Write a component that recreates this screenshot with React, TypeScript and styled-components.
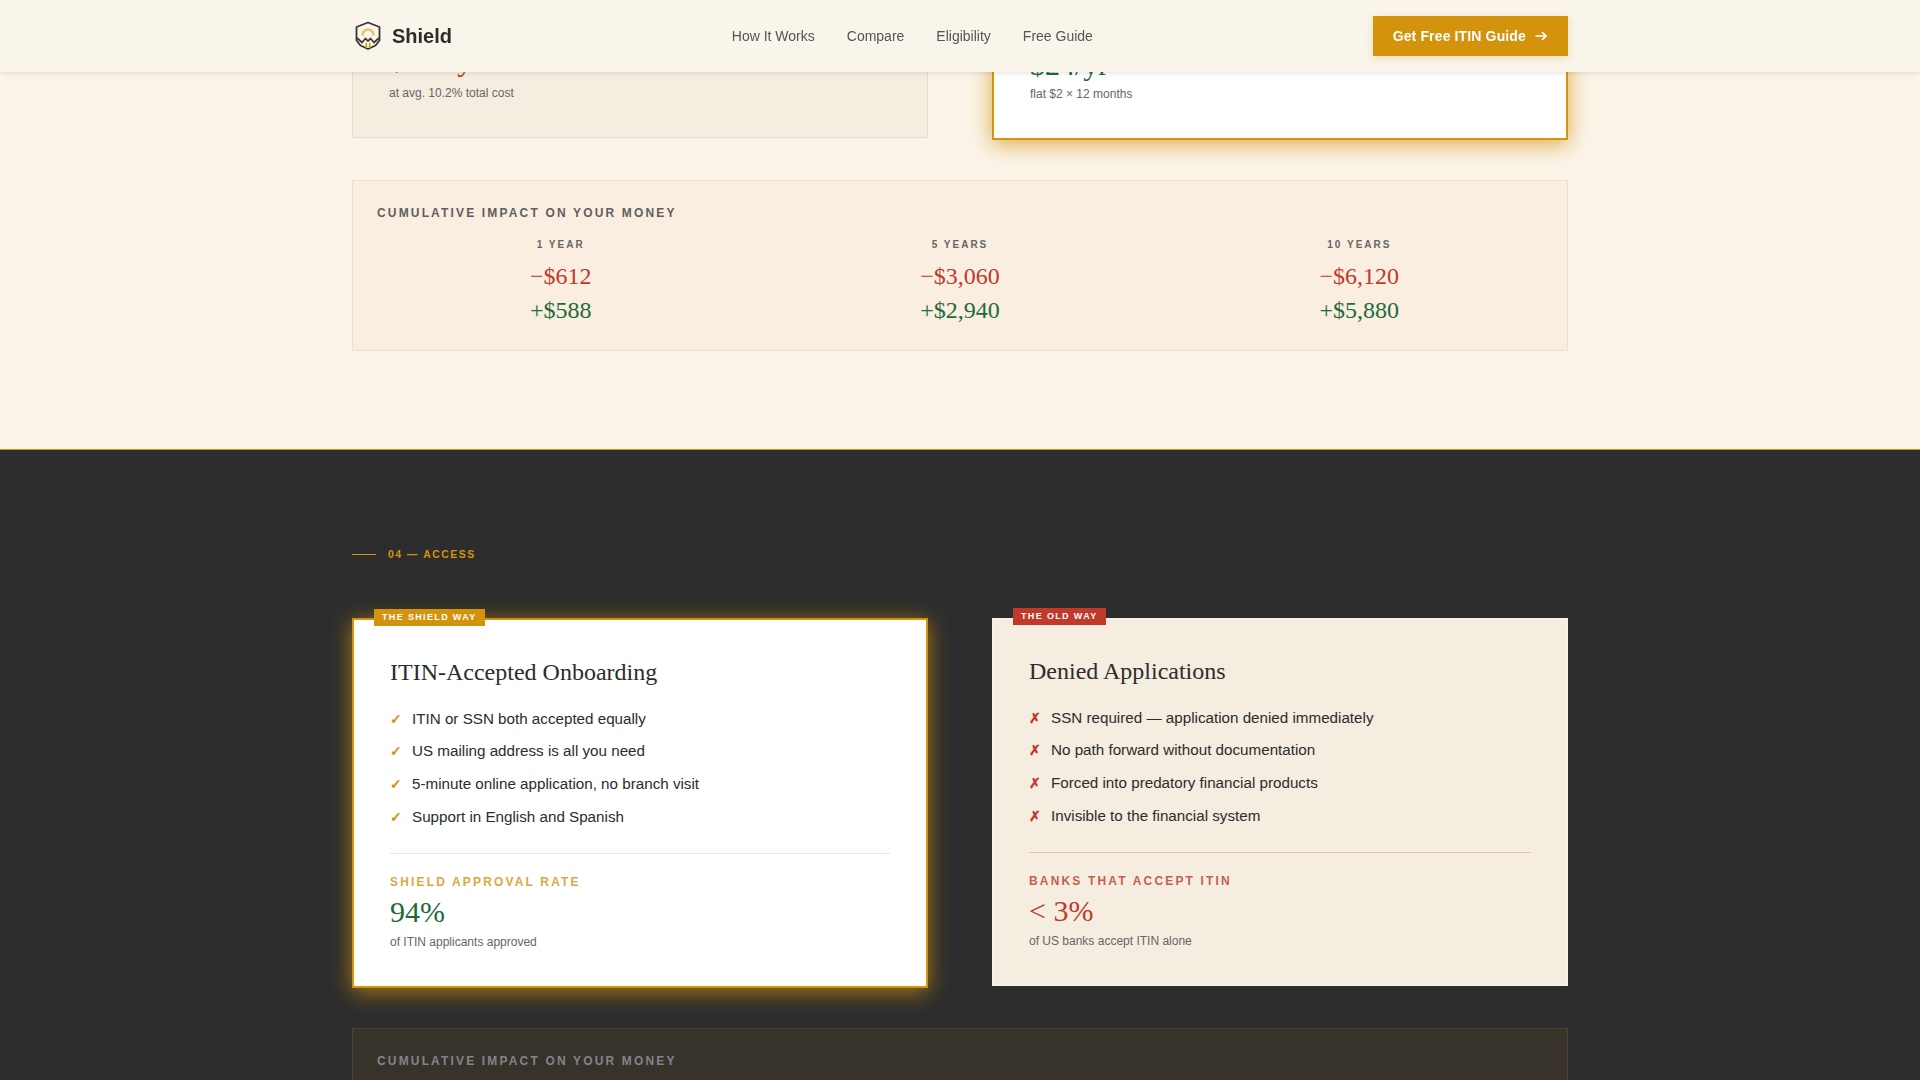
import React from "react";
import styled, { createGlobalStyle } from "styled-components";

const GOLD = "#d4930d";
const RED = "#c0392b";
const GREEN = "#1e6b3a";
const INK = "#2c2c2c";

const GlobalStyle = createGlobalStyle`
  html, body {
    margin: 0;
    height: 100%;
    overflow: hidden;
    background: #fbf4e8;
  }
  * { box-sizing: border-box; }
  body {
    font-family: "Liberation Sans", Arial, sans-serif;
    color: ${INK};
  }
`;

const Nav = styled.header`
  position: fixed;
  top: 0;
  left: 0;
  right: 0;
  z-index: 10;
  height: 72px;
  background: #faf5eb;
  box-shadow: 0 2px 4px rgba(44, 44, 44, 0.1);
`;

const Inner = styled.div`
  width: 1280px;
  margin: 0 auto;
  padding: 0 32px;
`;

const NavRow = styled(Inner)`
  height: 72px;
  display: flex;
  align-items: center;
  justify-content: space-between;
`;

const Brand = styled.a`
  display: flex;
  align-items: center;
  gap: 8px;
  font-size: 20px;
  font-weight: 700;
  color: ${INK};
`;

const NavLinks = styled.nav`
  display: flex;
  gap: 32px;
  font-size: 14px;
  color: #555;
`;

const NavButton = styled.a`
  display: flex;
  align-items: center;
  gap: 8px;
  height: 40px;
  padding: 0 20px;
  background: ${GOLD};
  color: #fff;
  font-size: 14px;
  font-weight: 700;
  letter-spacing: 0.01em;
  box-shadow: 0 2px 8px rgba(212, 147, 13, 0.25);
`;

const LightSection = styled.section`
  padding: 7px 0 98px;
`;

const DarkSection = styled.section`
  background: #2d2d2d;
  border-top: 1px solid ${GOLD};
  padding: 96px 0;
`;

const Eyebrow = styled.div`
  display: flex;
  align-items: center;
  gap: 12px;
  height: 16px;
  margin-bottom: 56px;
  font-size: 10.4px;
  font-weight: 700;
  letter-spacing: 0.15em;
  color: ${GOLD};
  &::before {
    content: "";
    width: 24px;
    height: 1px;
    background: ${GOLD};
  }
`;

const CardGrid = styled.div`
  display: grid;
  grid-template-columns: 1fr 1fr;
  gap: 64px;
  align-items: start;
`;

const Card = styled.article<{ $featured?: boolean; $onDark?: boolean }>`
  position: relative;
  padding: 36px;
  background: ${(p) => (p.$featured ? "#fff" : "#f5ede0")};
  border: ${(p) =>
    p.$featured
      ? `2px solid ${GOLD}`
      : `1px solid ${p.$onDark ? "#faf3e6" : "#e8dfd0"}`};
  box-shadow: ${(p) =>
    p.$featured ? "0 4px 20px rgba(212, 147, 13, 0.75)" : "none"};
`;

const Badge = styled.span<{ $old?: boolean }>`
  position: absolute;
  top: -11px;
  left: 20px;
  padding: 3px 8px;
  font-size: 9px;
  line-height: 11px;
  font-weight: 700;
  letter-spacing: 0.15em;
  color: #fff;
  background: ${(p) => (p.$old ? RED : GOLD)};
`;

const CardTitle = styled.h3`
  margin: 0 0 19.6px;
  font-family: "Liberation Serif", "Times New Roman", serif;
  font-weight: 400;
  font-size: 24px;
  line-height: 32px;
  color: ${INK};
`;

const Points = styled.ul`
  margin: 0 0 24.4px;
  padding: 0;
  list-style: none;
  display: flex;
  flex-direction: column;
  gap: 10px;
`;

const Point = styled.li<{ $bad?: boolean }>`
  display: flex;
  gap: 12px;
  font-size: 15.2px;
  line-height: 22.8px;
  color: ${INK};
  &::before {
    content: "${(p) => (p.$bad ? "✗" : "✓")}";
    width: 10px;
    font-size: 14px;
    font-weight: 700;
    color: ${(p) => (p.$bad ? RED : GOLD)};
  }
`;

const Stat = styled.div<{ $bad?: boolean }>`
  padding-top: 20px;
  border-top: 1px solid ${(p) => (p.$bad ? "rgba(192, 57, 43, 0.25)" : "#efe6d6")};
`;

const StatLabel = styled.div<{ $bad?: boolean }>`
  font-size: 12px;
  line-height: 16px;
  font-weight: 700;
  letter-spacing: 0.18em;
  color: ${(p) => (p.$bad ? RED : GOLD)};
  opacity: 0.8;
  margin-bottom: 3px;
`;

const StatValue = styled.div<{ $bad?: boolean; $nudge?: number }>`
  font-family: "Liberation Serif", "Times New Roman", serif;
  font-size: 30px;
  line-height: 38px;
  margin-top: ${(p) => p.$nudge ?? 0}px;
  margin-bottom: ${(p) => 3 - (p.$nudge ?? 0)}px;
  color: ${(p) => (p.$bad ? RED : GREEN)};
`;

const StatNote = styled.div`
  font-size: 12px;
  line-height: 16px;
  color: #666;
`;

const ImpactBox = styled.div<{ $dark?: boolean }>`
  margin-top: 40px;
  padding: 24px 24px 23px;
  background: ${(p) => (p.$dark ? "#37332b" : "#f9eee0")};
  border: 1px solid ${(p) => (p.$dark ? "#4c442f" : "#efdfc2")};
`;

const ImpactTitle = styled.div<{ $dark?: boolean }>`
  font-size: 12px;
  line-height: 16px;
  font-weight: 700;
  letter-spacing: 0.18em;
  color: ${(p) => (p.$dark ? "#85838a" : "#5f5f5f")};
  margin-bottom: 16px;
`;

const ImpactGrid = styled.div`
  display: grid;
  grid-template-columns: repeat(3, 1fr);
  gap: 32px;
  text-align: center;
`;

const ImpactYear = styled.div`
  font-size: 10px;
  line-height: 15px;
  font-weight: 700;
  letter-spacing: 0.2em;
  color: #666;
  margin-bottom: 7px;
`;

const ImpactAmount = styled.div<{ $gain?: boolean }>`
  font-family: "Liberation Serif", "Times New Roman", serif;
  font-size: 24px;
  line-height: 34px;
  color: ${(p) => (p.$gain ? GREEN : RED)};
`;

const Logo = () => (
  <svg width="32" height="32" viewBox="0 0 32 32" fill="none">
    <path
      d="M16 2.5 L27.5 7 V20.5 L23.5 25.5 L16 29 L8.5 25.5 L4.5 20.5 V7 Z"
      fill="#fbf6ea"
      stroke="#3a362e"
      strokeWidth="1.8"
      strokeLinejoin="round"
    />
    <path d="M10.5 15.5 C10.5 7.5 21.5 7.5 21.5 15.5" stroke="#e5c07b" strokeWidth="2.6" />
    <path
      d="M5 18 L10 22.5 L13.5 18.5 L16 21 L18.5 18.5 L22 22.5 L27 18"
      stroke="#3a362e"
      strokeWidth="1.7"
    />
    <path d="M14.3 23 V28 M17.7 23 V28" stroke={GOLD} strokeWidth="1.5" />
  </svg>
);

const Arrow = () => (
  <svg width="14" height="14" viewBox="0 0 14 14" fill="none" stroke="#fff" strokeWidth="1.7">
    <path d="M1.5 7 H12 M8 3 L12 7 L8 11" />
  </svg>
);

const impact = [
  { year: "1 YEAR", lost: "−$612", kept: "+$588" },
  { year: "5 YEARS", lost: "−$3,060", kept: "+$2,940" },
  { year: "10 YEARS", lost: "−$6,120", kept: "+$5,880" },
];

const shieldPoints = [
  "ITIN or SSN both accepted equally",
  "US mailing address is all you need",
  "5-minute online application, no branch visit",
  "Support in English and Spanish",
];

const oldPoints = [
  "SSN required — application denied immediately",
  "No path forward without documentation",
  "Forced into predatory financial products",
  "Invisible to the financial system",
];

const App: React.FC = () => (
  <>
    <GlobalStyle />
    <Nav>
      <NavRow>
        <Brand>
          <Logo />
          Shield
        </Brand>
        <NavLinks>
          <span>How It Works</span>
          <span>Compare</span>
          <span>Eligibility</span>
          <span>Free Guide</span>
        </NavLinks>
        <NavButton>
          Get Free ITIN Guide
          <Arrow />
        </NavButton>
      </NavRow>
    </Nav>
    <main>
      <LightSection>
        <Inner>
          <CardGrid>
            <Card>
              <StatValue $bad $nudge={-2}>
                $612/yr
              </StatValue>
              <StatNote>at avg. 10.2% total cost</StatNote>
            </Card>
            <Card $featured>
              <StatValue $nudge={1}>$24/yr</StatValue>
              <StatNote>flat $2 × 12 months</StatNote>
            </Card>
          </CardGrid>
          <ImpactBox>
            <ImpactTitle>CUMULATIVE IMPACT ON YOUR MONEY</ImpactTitle>
            <ImpactGrid>
              {impact.map((row) => (
                <div key={row.year}>
                  <ImpactYear>{row.year}</ImpactYear>
                  <ImpactAmount>{row.lost}</ImpactAmount>
                  <ImpactAmount $gain>{row.kept}</ImpactAmount>
                </div>
              ))}
            </ImpactGrid>
          </ImpactBox>
        </Inner>
      </LightSection>
      <DarkSection>
        <Inner>
          <Eyebrow>04 — ACCESS</Eyebrow>
          <CardGrid>
            <Card $featured>
              <Badge>THE SHIELD WAY</Badge>
              <CardTitle>ITIN-Accepted Onboarding</CardTitle>
              <Points>
                {shieldPoints.map((text) => (
                  <Point key={text}>{text}</Point>
                ))}
              </Points>
              <Stat>
                <StatLabel>SHIELD APPROVAL RATE</StatLabel>
                <StatValue>94%</StatValue>
                <StatNote>of ITIN applicants approved</StatNote>
              </Stat>
            </Card>
            <Card $onDark>
              <Badge $old>THE OLD WAY</Badge>
              <CardTitle>Denied Applications</CardTitle>
              <Points>
                {oldPoints.map((text) => (
                  <Point key={text} $bad>
                    {text}
                  </Point>
                ))}
              </Points>
              <Stat $bad>
                <StatLabel $bad>BANKS THAT ACCEPT ITIN</StatLabel>
                <StatValue $bad>{"< 3%"}</StatValue>
                <StatNote>of US banks accept ITIN alone</StatNote>
              </Stat>
            </Card>
          </CardGrid>
          <ImpactBox $dark>
            <ImpactTitle $dark>CUMULATIVE IMPACT ON YOUR MONEY</ImpactTitle>
          </ImpactBox>
        </Inner>
      </DarkSection>
    </main>
  </>
);

export default App;
